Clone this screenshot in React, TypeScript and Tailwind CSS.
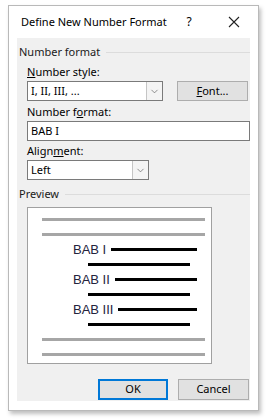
import { ChevronDown } from 'lucide-react'

const ui = { fontFamily: '"Noto Sans", "Open Sans", sans-serif' }
const arial = { fontFamily: '"Liberation Sans", Arial, sans-serif' }

function Heading({ label }: { label: string }) {
    return (
        <div className="flex items-center h-[16px] pl-[2px] text-[11px] text-[#1a1a1a]">
            <span>{label}</span>
            <div className="flex-1 ml-[6px] h-px bg-[#dcdcdc]" />
        </div>
    )
}

function Combo({ value, width }: { value: string; width: string }) {
    return (
        <div className={`flex h-[20px] border border-[#7a7a7a] bg-white ${width}`}>
            <div className="flex-1 pl-[3px] text-[11px] leading-[18px] text-black">{value}</div>
            <div className="w-[16px] flex items-center justify-center border-l border-[#c5c5c5] bg-[#f4f4f4]">
                <ChevronDown className="w-[11px] h-[11px] text-[#606060]" strokeWidth={1.5} />
            </div>
        </div>
    )
}

function PreviewLine({ gray, ml, w }: { gray?: boolean; ml: string; w: string }) {
    return (
        <div className="flex items-center h-[15px]">
            <div className={`h-[3px] ${ml} ${w} ${gray ? 'bg-[#a6a6a6]' : 'bg-black'}`} />
        </div>
    )
}

function PreviewHead({ text }: { text: string }) {
    return (
        <div className="flex items-center h-[15px] pl-[45px] pr-[14px]">
            <span className="text-[13px] leading-none text-[#23233d]" style={arial}>{text}</span>
            <div className="flex-1 ml-[5px] h-[3px] bg-black" />
        </div>
    )
}

export default function App() {
    return (
        <div className="w-[266px] h-[420px] bg-white pt-[5px] pl-[8px]" style={ui}>
            <div className="w-[251px] h-[406px] border border-[#b9b9b9] bg-white shadow-[2px_3px_4px_rgba(0,0,0,0.25)] flex flex-col">
                <div className="h-[32px] flex items-center pl-[12px] text-[11px] text-black">
                    <span className="flex-1">Define New Number Format</span>
                    <span className="w-[20px] text-center mr-[29px] text-[12px]">?</span>
                    <svg width="12" height="12" viewBox="0 0 12 12" className="mr-[18px]">
                        <path d="M1 1 L11 11 M11 1 L1 11" stroke="#222" strokeWidth="1.1" />
                    </svg>
                </div>
                <div className="mx-[8px] mb-[9px] flex-1 bg-[#f0f0f0] flex flex-col pt-[6px]">
                    <Heading label="Number format" />
                    <div className="pl-[10px] flex flex-col text-[11px] text-black">
                        <div className="h-[18px] mt-[3px] leading-[18px]"><u>N</u>umber style:</div>
                        <div className="flex items-center gap-[14px]">
                            <Combo value="I, II, III, ..." width="w-[136px]" />
                            <div className="w-[71px] h-[20px] border border-[#adadad] bg-[#e1e1e1] flex items-center justify-center">
                                <span><u>F</u>ont...</span>
                            </div>
                        </div>
                        <div className="h-[18px] mt-[2px] leading-[18px]">Number f<u>o</u>rmat:</div>
                        <div className="h-[20px] border border-[#7a7a7a] bg-white pl-[3px] leading-[18px]">BAB I</div>
                        <div className="h-[18px] mt-[1px] leading-[18px]">Align<u>m</u>ent:</div>
                        <Combo value="Left" width="w-[122px]" />
                    </div>
                    <div className="mt-[6px]">
                        <Heading label="Preview" />
                    </div>
                    <div className="ml-[10px] mt-[5px] w-[185px] h-[157px] border border-[#a0a0a0] bg-white pt-[4px] flex flex-col">
                        <PreviewLine gray ml="ml-[14px]" w="w-[163px]" />
                        <PreviewLine gray ml="ml-[14px]" w="w-[163px]" />
                        <PreviewHead text="BAB I" />
                        <PreviewLine ml="ml-[60px]" w="w-[102px]" />
                        <PreviewHead text="BAB II" />
                        <PreviewLine ml="ml-[60px]" w="w-[102px]" />
                        <PreviewHead text="BAB III" />
                        <PreviewLine ml="ml-[60px]" w="w-[102px]" />
                        <PreviewLine gray ml="ml-[14px]" w="w-[163px]" />
                        <PreviewLine gray ml="ml-[14px]" w="w-[163px]" />
                    </div>
                    <div className="flex justify-end gap-[10px] mt-[15px] pr-[1px] text-[11px] text-black">
                        <div className="w-[70px] h-[21px] border-2 border-[#0078d7] bg-[#e1e1e1] flex items-center justify-center">OK</div>
                        <div className="w-[71px] h-[21px] border border-[#adadad] bg-[#e1e1e1] flex items-center justify-center">Cancel</div>
                    </div>
                </div>
            </div>
        </div>
    )
}
